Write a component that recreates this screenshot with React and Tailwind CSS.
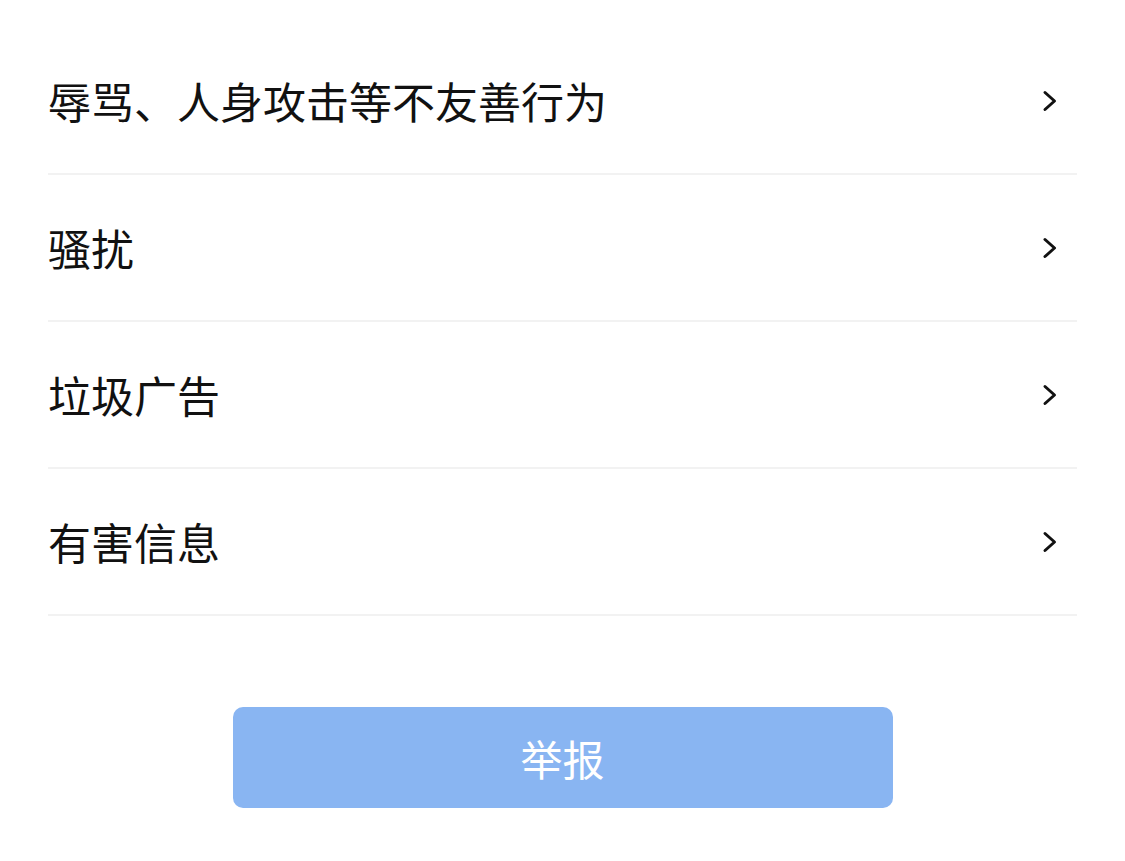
import React from "react";

const reasons = ["辱骂、人身攻击等不友善行为", "骚扰", "垃圾广告", "有害信息"];

function Chevron() {
  return (
    <svg width="16" height="24" viewBox="0 0 16 24" fill="none">
      <path d="M3 3.5 L12.5 12 L3 20.5" stroke="#111" strokeWidth="3" strokeLinecap="round" strokeLinejoin="round" />
    </svg>
  );
}

export default function App() {
  return (
    <div
      className="min-h-screen bg-white pt-[28px]"
      style={{ fontFamily: '"Noto Sans CJK SC", "Noto Sans", sans-serif' }}
    >
      <div className="mx-[48px]">
        {reasons.map((r) => (
          <div
            key={r}
            className="flex h-[147px] items-center justify-between border-b-2 border-[#f2f2f2]"
          >
            <span className="text-[43px] leading-none text-[#111]">{r}</span>
            <span className="mr-[19px]">
              <Chevron />
            </span>
          </div>
        ))}
      </div>
      <div className="mt-[91px] flex justify-center">
        <button className="h-[101px] w-[660px] rounded-[10px] bg-[#89b5f2] text-[42px] text-white">
          举报
        </button>
      </div>
    </div>
  );
}
